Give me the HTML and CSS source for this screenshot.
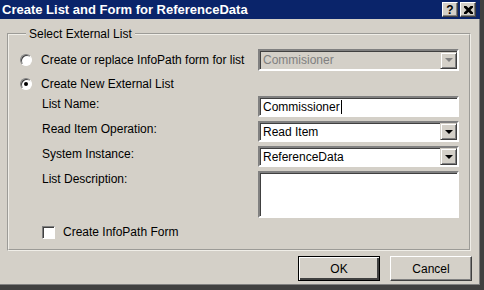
FILE: index.html
```html
<!DOCTYPE html>
<html lang="en">
<head>
  <meta charset="UTF-8" />
  <title>Create List and Form for ReferenceData</title>
  <link rel="stylesheet" href="styles.css">
</head>
<body>
  <div class="dialog">
    <div class="titlebar">
      <span class="title">Create List and Form for ReferenceData</span>
      <div class="caption-buttons">
        <span class="cap-btn">?</span>
        <span class="cap-btn">
          <svg width="9" height="8" viewBox="0 0 9 8"><path d="M1 0 L4.5 3.5 L8 0 M1 8 L4.5 4.5 L8 8 M0 0 L4 4 L0 8 M9 0 L5 4 L9 8" stroke="#000" stroke-width="2" fill="none"/></svg>
        </span>
      </div>
    </div>

    <div class="content">
      <fieldset class="group">
        <legend>Select External List</legend>
        <div class="form">
          <label class="choice">
            <span class="radio"></span>
            Create or replace InfoPath form for list
          </label>
          <div class="combo disabled">
            <span class="combo-text">Commisioner</span>
            <span class="arrow"><i></i></span>
          </div>

          <label class="choice row-new">
            <span class="radio checked"></span>
            Create New External List
          </label>
          <div></div>

          <span class="field-label">List Name:</span>
          <div class="textbox">Commissioner<span class="caret"></span></div>

          <span class="field-label">Read Item Operation:</span>
          <div class="combo">
            <span class="combo-text">Read Item</span>
            <span class="arrow"><i></i></span>
          </div>

          <span class="field-label">System Instance:</span>
          <div class="combo">
            <span class="combo-text">ReferenceData</span>
            <span class="arrow"><i></i></span>
          </div>

          <span class="field-label">List Description:</span>
          <div class="textarea"></div>

          <label class="check-row">
            <span class="checkbox"></span>
            Create InfoPath Form
          </label>
        </div>
      </fieldset>

      <div class="buttons">
        <button class="btn default">OK</button>
        <button class="btn">Cancel</button>
      </div>
    </div>
  </div>
</body>
</html>
```

FILE: styles.css
```css
* {
  box-sizing: border-box;
}

body {
  margin: 0;
  background: #404040;
  font-family: 'Liberation Sans', Arial, sans-serif;
  font-size: 12px;
  color: #000;
}

.dialog {
  width: 481px;
  height: 286px;
  background: #d4d0c8;
  border-right: 1px solid #404040;
  border-bottom: 1px solid #404040;
  box-shadow: inset -1px -1px 0 #808080;
  display: flex;
  flex-direction: column;
}

.titlebar {
  height: 19px;
  background: #0a246a;
  display: flex;
  align-items: center;
  justify-content: space-between;
  padding: 0 4px 0 2px;
}

.title {
  color: #fff;
  font-weight: bold;
  font-size: 13px;
}

.caption-buttons {
  display: flex;
  gap: 2px;
}

.cap-btn {
  width: 16px;
  height: 15px;
  background: #d4d0c8;
  border: 1px solid;
  border-color: #fff #404040 #404040 #fff;
  box-shadow: inset -1px -1px 0 #808080;
  display: flex;
  align-items: center;
  justify-content: center;
  font-weight: bold;
  font-size: 12px;
  line-height: 1;
}

.content {
  flex: 1;
  padding: 8px 8px 0 7px;
}

.group {
  margin: 0 2px 0 0;
  padding: 8px 10px 4px 11px;
  border: 2px groove #f0eee8;
  height: 224px;
}

.group legend {
  padding: 0 3px;
  margin-left: 6px;
  line-height: 14px;
}

.form {
  display: grid;
  grid-template-columns: 238px 201px;
  align-items: start;
}

.choice, .check-row {
  display: flex;
  align-items: center;
  gap: 9px;
  white-space: nowrap;
}

.choice {
  height: 22px;
}

.row-new {
  height: 25px;
}

.radio {
  width: 12px;
  height: 12px;
  border-radius: 50%;
  background: #fff;
  border: 1px solid;
  border-color: #808080 #fff #fff #808080;
  box-shadow: inset 1px 1px 0 #404040;
  display: flex;
  align-items: center;
  justify-content: center;
  flex-shrink: 0;
}

.radio.checked::after {
  content: '';
  width: 4px;
  height: 4px;
  border-radius: 50%;
  background: #000;
}

.field-label {
  padding: 1px 0 0 22px;
  margin-bottom: 4px;
}

.combo, .textbox, .textarea {
  background: #fff;
  border: 2px solid;
  border-color: #808080 #fff #fff #808080;
  box-shadow: inset 1px 1px 0 #404040, 1px 1px 0 #d4d0c8;
}

.combo {
  height: 21px;
  display: flex;
  align-items: center;
  justify-content: space-between;
  padding-left: 3px;
  margin-bottom: 4px;
}

.combo.disabled {
  height: 22px;
  margin-bottom: 0;
  background: #d4d0c8;
  color: #808080;
}

.arrow {
  width: 17px;
  height: 17px;
  background: #d4d0c8;
  border: 1px solid;
  border-color: #d4d0c8 #404040 #404040 #d4d0c8;
  box-shadow: inset 1px 1px 0 #fff, inset -1px -1px 0 #808080;
  display: flex;
  align-items: center;
  justify-content: center;
}

.arrow i {
  width: 0;
  height: 0;
  border-left: 4px solid transparent;
  border-right: 4px solid transparent;
  border-top: 4px solid #000;
}

.combo.disabled .arrow i {
  border-top-color: #808080;
}

.textbox {
  height: 21px;
  padding-left: 3px;
  display: flex;
  align-items: center;
  margin-bottom: 4px;
}

.caret {
  display: inline-block;
  width: 1px;
  height: 14px;
  background: #000;
  margin-left: 1px;
}

.textarea {
  height: 47px;
  margin-bottom: 7px;
}

.check-row {
  grid-column: 1 / 3;
  padding-left: 22px;
  gap: 8px;
}

.checkbox {
  width: 13px;
  height: 13px;
  background: #fff;
  border: 1px solid;
  border-color: #808080 #fff #fff #808080;
  box-shadow: inset 1px 1px 0 #404040;
}

.buttons {
  display: flex;
  justify-content: flex-end;
  gap: 10px;
  padding-top: 5px;
}

.btn {
  width: 82px;
  height: 25px;
  background: #d4d0c8;
  border: 1px solid;
  border-color: #fff #404040 #404040 #fff;
  box-shadow: inset -1px -1px 0 #808080;
  font-family: 'Liberation Sans', Arial, sans-serif;
  font-size: 12px;
  padding: 0;
}

.btn.default {
  border: 1px solid #000;
  box-shadow: inset 1px 1px 0 #fff, inset -2px -2px 0 #404040, inset -1px -1px 0 #808080;
}
```
